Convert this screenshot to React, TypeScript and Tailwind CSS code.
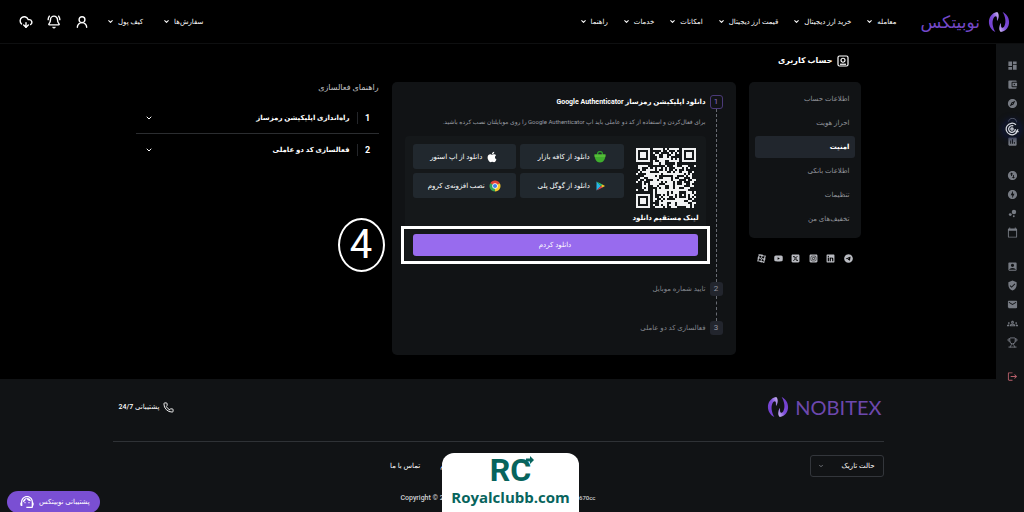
import type { ReactNode } from "react";
import {
  MdAccountBalanceWallet,
  MdAccountBox,
  MdArrowCircleUp,
  MdBubbleChart,
  MdCalendarToday,
  MdDashboard,
  MdExplore,
  MdInsertChart,
  MdLocalPostOffice,
  MdLogout,
  MdOfflineBolt,
  MdOutlineGroups,
  MdSupportAgent,
  MdSwapVerticalCircle,
  MdVerifiedUser,
} from "react-icons/md";
import { FaApple } from "react-icons/fa";
import { FaLinkedin, FaSquareInstagram, FaSquareXTwitter, FaTelegram, FaYoutube } from "react-icons/fa6";
import { SiAparat } from "react-icons/si";
import { BellRing, ChevronDown, CloudDownload, Phone, Trophy, UserRound } from "lucide-react";

const mainNav = ["معامله", "خرید ارز دیجیتال", "قیمت ارز دیجیتال", "امکانات", "خدمات", "راهنما"];
const userNav = ["سفارش‌ها", "کیف پول"];

const headerActions = [
  { label: "پروفایل", Icon: UserRound },
  { label: "اعلان‌ها", Icon: BellRing },
  { label: "دانلود", Icon: CloudDownload },
];

const accountMenu = [
  "اطلاعات حساب",
  "احراز هویت",
  "امنیت",
  "اطلاعات بانکی",
  "تنظیمات",
  "تخفیف‌های من",
];

const socials = [
  { label: "Telegram", Icon: FaTelegram },
  { label: "LinkedIn", Icon: FaLinkedin },
  { label: "Instagram", Icon: FaSquareInstagram },
  { label: "X", Icon: FaSquareXTwitter },
  { label: "YouTube", Icon: FaYoutube },
  { label: "Aparat", Icon: SiAparat },
];

const railGroups = [
  [MdDashboard, MdAccountBalanceWallet, MdExplore, MdArrowCircleUp, MdInsertChart],
  [MdSwapVerticalCircle, MdOfflineBolt, MdBubbleChart, MdCalendarToday],
  [MdAccountBox, MdVerifiedUser, MdLocalPostOffice, MdOutlineGroups, Trophy],
];

const guides = ["راه‌اندازی اپلیکیشن رمزساز", "فعالسازی کد دو عاملی"];

const downloads = [
  { label: "دانلود از کافه بازار", icon: <BazaarIcon /> },
  { label: "دانلود از اپ استور", icon: <FaApple className="size-3" /> },
  { label: "دانلود از گوگل پلی", icon: <PlayIcon /> },
  { label: "نصب افزونه‌ی کروم", icon: <ChromeIcon /> },
];

export default function App() {
  return (
    <div
      dir="rtl"
      className="relative flex min-h-screen flex-col overflow-hidden bg-black font-['Roboto','DejaVu_Sans',sans-serif] text-[7px] leading-3 text-white"
    >
      <Header />
      <div className="flex flex-1">
        <SideRail />
        <div className="flex min-w-0 flex-1 flex-col">
          <main className="mx-auto w-full max-w-[725px] pt-2 pb-6">
            <h1 className="mb-3 flex h-[18px] items-center gap-1 pr-3 text-[8px] font-bold">
              <AccountIcon />
              حساب کاربری
            </h1>
            <div className="grid grid-cols-[minmax(0,112fr)_minmax(0,344fr)_minmax(0,243fr)] items-start gap-[13px]">
              <AccountSidebar />
              <ActivationSteps />
              <ActivationGuide />
            </div>
          </main>
          <Footer />
        </div>
      </div>
      <SponsorBadge />
      <button
        type="button"
        className="absolute -bottom-px left-[7px] flex h-[22px] items-center gap-1 rounded-full bg-[#7a4fd3] pr-[10px] pl-3 font-medium"
      >
        پشتیبانی نوبیتکس
        <MdSupportAgent className="size-4" aria-hidden="true" />
      </button>
    </div>
  );
}

function Header() {
  return (
    <header className="flex h-11 shrink-0 items-center border-b border-[#0e0f10] pr-[14px] pl-[19px]">
      <a href="#" className="flex items-center gap-2 text-[17px] leading-6 text-[#7448c8]">
        <NobitexMark className="size-[22px]" />
        نوبیتکس
      </a>
      <nav className="mr-6 flex gap-[15px]">
        {mainNav.map((label) => (
          <NavMenu key={label} label={label} />
        ))}
      </nav>
      <nav className="mr-auto flex gap-5">
        {userNav.map((label) => (
          <NavMenu key={label} label={label} />
        ))}
      </nav>
      <div className="mr-[18px] flex gap-[14px]">
        {headerActions.map(({ label, Icon }) => (
          <button key={label} type="button" aria-label={label}>
            <Icon className="size-[14px]" strokeWidth={2.4} />
          </button>
        ))}
      </div>
    </header>
  );
}

function NavMenu({ label }: { label: string }) {
  return (
    <button type="button" className="flex items-center gap-1 whitespace-nowrap font-medium">
      {label}
      <ChevronDown className="size-[7px]" strokeWidth={3.5} aria-hidden="true" />
    </button>
  );
}

function SideRail() {
  return (
    <aside className="relative flex w-7 shrink-0 flex-col items-center gap-[23px] bg-[#111315] pt-4 pl-1 text-[#777b83]">
      {railGroups.map((icons, group) => (
        <div key={group} className="flex flex-col gap-2">
          {icons.map((Icon, index) => (
            <a key={index} href="#" className="block">
              <Icon className="size-[11px]" />
            </a>
          ))}
        </div>
      ))}
      <a href="#" aria-label="خروج" className="text-[#b9606b]">
        <MdLogout className="size-[11px]" />
      </a>
      <div className="absolute top-[77px] left-2 flex size-4 items-center justify-center rounded-full bg-[#111624] shadow-[0_0_6px_2px_#10173a]">
        <svg viewBox="0 0 16 16" className="size-[14px] fill-none stroke-[#d6d9e2]" strokeWidth="1.4" aria-hidden="true">
          <path d="M14.5 9A6.6 6.6 0 1 1 12.5 3.2M15 8.5l-2 2.5h2.6M11.8 8A3.8 3.8 0 1 1 9.5 4.5" />
          <circle cx="8" cy="8" r="1.3" />
        </svg>
      </div>
    </aside>
  );
}

function AccountSidebar() {
  return (
    <div>
      <ul className="flex flex-col gap-[2px] rounded-[5px] bg-[#111315] px-[6px] pt-[6px] pb-2 text-[#92959b]">
        {accountMenu.map((label) => (
          <li key={label}>
            <a
              href="#"
              className={`flex h-[22px] items-center rounded-[3px] px-[5px] ${
                label === "امنیت" ? "bg-[#21262d] font-bold text-white" : ""
              }`}
            >
              {label}
            </a>
          </li>
        ))}
      </ul>
      <div className="mt-4 flex justify-between px-2 text-[#b9bbc1]">
        {socials.map(({ label, Icon }) => (
          <a key={label} href="#" aria-label={label}>
            <Icon className="size-[9px]" />
          </a>
        ))}
      </div>
    </div>
  );
}

function ActivationSteps() {
  return (
    <ol className="rounded-[5px] bg-[#111315] px-[13px] pt-[13px] pb-5">
      <Step number={1} isActive title="دانلود اپلیکیشن رمزساز Google Authenticator">
        <p className="mt-[6px] h-[14px] whitespace-nowrap text-[6px] leading-[14px] text-[#9a9da4]">
          برای فعال‌کردن و استفاده از کد دو عاملی باید اپ Google Authenticator را روی موبایلتان نصب کرده باشید.
        </p>
        <div className="mt-[7px] mb-[18px] rounded-[4px] bg-[#15181a] p-2">
          <div className="flex h-[90px] gap-3 pr-[2px]">
            <div className="mt-1 w-[60px] shrink-0">
              <QrCode />
              <p className="mt-1 flex justify-center font-bold whitespace-nowrap">لینک مستقیم دانلود</p>
            </div>
            <div className="grid flex-1 grid-cols-2 content-start gap-1">
              {downloads.map(({ label, icon }) => (
                <button
                  key={label}
                  type="button"
                  className="flex h-[25px] items-center justify-center gap-1 rounded-[3px] bg-[#21282e] font-medium whitespace-nowrap"
                >
                  {icon}
                  {label}
                </button>
              ))}
            </div>
          </div>
          <div className="relative">
            <button type="button" className="h-[22px] w-full rounded-[3px] bg-[#986bee] font-medium">
              دانلود کردم
            </button>
            <div className="pointer-events-none absolute -inset-x-3 -inset-y-2 border-[3px] border-white" />
            <div className="absolute -top-4 -left-[75px] flex h-[54px] w-[47px] items-center justify-center rounded-[50%] border-2 border-white bg-black text-[40px] leading-none">
              4
            </div>
          </div>
        </div>
      </Step>
      <Step number={2} title="تایید شماره موبایل">
        <div className="h-[25px]" />
      </Step>
      <Step number={3} title="فعالسازی کد دو عاملی" />
    </ol>
  );
}

type StepProps = {
  number: number;
  title: string;
  isActive?: boolean;
  children?: ReactNode;
};

function Step({ number, title, isActive = false, children }: StepProps) {
  return (
    <li className="flex gap-1">
      <div className="flex w-[13px] shrink-0 flex-col items-center">
        <span
          className={`flex h-[14px] w-[13px] items-center justify-center rounded-[3px] text-[8px] ${
            isActive ? "border border-[#4b3a78] text-[#8e70d0]" : "bg-[#22252d] text-[#90939d]"
          }`}
        >
          {number}
        </span>
        {children ? <span className="flex-1 border-r border-dashed border-[#686b72]" /> : null}
      </div>
      <div className="min-w-0 flex-1">
        <h2 className={`h-[14px] leading-[14px] ${isActive ? "font-bold" : "font-medium text-[#84878e]"}`}>{title}</h2>
        {children}
      </div>
    </li>
  );
}

function ActivationGuide() {
  return (
    <section>
      <h2 className="mb-2 text-[8px] text-[#c6c7c9]">راهنمای فعالسازی</h2>
      <div className="divide-y divide-[#2b2d30]">
        {guides.map((title, index) => (
          <button key={title} type="button" className="flex h-8 w-full items-center pr-2 pl-[9px] font-bold">
            <span className="w-[6px] text-[9px]">{index + 1}</span>
            <span className="mr-[7px] h-3 border-r border-[#24262a] pr-[7px]">{title}</span>
            <ChevronDown className="mr-auto size-2" strokeWidth={3} aria-hidden="true" />
          </button>
        ))}
      </div>
    </section>
  );
}

function Footer() {
  return (
    <footer className="flex-1 bg-[#111315]">
      <div className="mx-auto w-full max-w-[771px]">
        <div className="flex items-center justify-between border-b border-[#2f3236] pt-4 pb-[22px]">
          <div dir="ltr" className="mr-[2px] flex items-center gap-[6px] font-['Lato',sans-serif] text-[20px] leading-6 text-[#6d48ae]">
            <NobitexMark className="size-[22px]" />
            NOBITEX
          </div>
          <a href="#" className="ml-[6px] flex items-center gap-1 font-medium">
            <Phone className="size-[11px]" aria-hidden="true" />
            پشتیبانی 24/7
          </a>
        </div>
        <div className="flex items-center pt-[13px]">
          <div className="relative w-[74px]">
            <select
              aria-label="حالت نمایش"
              className="h-[22px] w-full appearance-none rounded-[3px] border border-[#33363b] bg-[#111315] pr-2 text-[7px] font-medium"
            >
              <option>حالت تاریک</option>
            </select>
            <ChevronDown
              className="pointer-events-none absolute top-2 left-2 size-[6px] text-[#8b8e94]"
              strokeWidth={3}
              aria-hidden="true"
            />
          </div>
          <nav className="mr-auto ml-[36%] flex gap-5 font-medium">
            <a href="#">حریم</a>
            <a href="#">تماس با ما</a>
          </nav>
        </div>
        <p dir="ltr" className="mx-auto mt-[15px] flex w-[195px] justify-between font-medium text-[#d0d1d3]">
          <span>Copyright © 20</span>
          <span className="text-[6px]">670cc</span>
        </p>
      </div>
    </footer>
  );
}

function SponsorBadge() {
  return (
    <div
      dir="ltr"
      className="absolute bottom-0 left-1/2 flex h-[59px] w-[137px] -translate-x-[70px] flex-col items-center rounded-t-[12px] bg-white text-[#07645d]"
    >
      <div className="relative text-[32px] leading-[34px] font-bold">
        RC
        <svg viewBox="0 0 8 8" className="absolute top-[3px] -right-[3px] size-2 fill-[#07645d]" aria-hidden="true">
          <path d="M0 2.500H4V0L8 4L4 8V5.500H0Z" />
        </svg>
      </div>
      <p className="font-['Open_Sans',sans-serif] text-[15px] leading-5 font-bold">Royalclubb.com</p>
    </div>
  );
}

function NobitexMark({ className }: { className: string }) {
  return (
    <svg viewBox="0 0 24 24" className={className} aria-hidden="true">
      <defs>
        <linearGradient id="mark" x1="0" y1="1" x2="1" y2="0">
          <stop offset="0" stopColor="#6a35c4" />
          <stop offset="0.6" stopColor="#8050dc" />
          <stop offset="1" stopColor="#d3c2f3" />
        </linearGradient>
      </defs>
      <path
        fill="url(#mark)"
        d="M10 1C4 2 1 7 1 12C1 17 4 21 8 23C5 18 4 12 6 8C7 5.500 9 5 9.500 6.500C10 8 9.500 9.500 10 11C12 8 12.500 3 10 1Z"
      />
      <path
        fill="url(#mark)"
        transform="rotate(180 12 12)"
        d="M10 1C4 2 1 7 1 12C1 17 4 21 8 23C5 18 4 12 6 8C7 5.500 9 5 9.500 6.500C10 8 9.500 9.500 10 11C12 8 12.500 3 10 1Z"
      />
    </svg>
  );
}

function AccountIcon() {
  return (
    <svg viewBox="0 0 24 24" className="size-3 fill-none stroke-white" strokeWidth="2.4" aria-hidden="true">
      <rect x="2" y="2" width="20" height="20" rx="3" />
      <circle cx="12" cy="10.500" r="4" />
      <path d="M6 18.500H18" />
    </svg>
  );
}

function BazaarIcon() {
  return (
    <svg viewBox="0 0 24 24" className="size-3" aria-hidden="true">
      <path d="M7 8V6a5 5 0 0 1 10 0v2" fill="none" stroke="#2f9b2c" strokeWidth="2.500" />
      <path d="M1 7H23C23 16 19 23 12 23S1 16 1 7Z" fill="#3fae2e" />
      <path d="M1 7H23L22.500 12H1.500Z" fill="#55bd38" />
    </svg>
  );
}

function PlayIcon() {
  return (
    <svg viewBox="0 0 24 24" className="size-3" aria-hidden="true">
      <path d="M5 3V21L14 12Z" fill="#27b6e8" />
      <path d="M5 3L17 9L14 12Z" fill="#2fc66b" />
      <path d="M5 21L17 15L14 12Z" fill="#e8434d" />
      <path d="M17 9L22 12L17 15L14 12Z" fill="#f5c228" />
    </svg>
  );
}

function ChromeIcon() {
  return (
    <svg viewBox="0 0 24 24" className="size-3" aria-hidden="true">
      <path d="M12 12L2.500 6.500A11 11 0 0 1 21.500 6.500Z" fill="#e24335" />
      <path d="M12 12L21.500 6.500A11 11 0 0 1 12 23Z" fill="#f7c82d" />
      <path d="M12 12V23A11 11 0 0 1 2.500 6.500Z" fill="#35a353" />
      <circle cx="12" cy="12" r="5.500" fill="#fff" />
      <circle cx="12" cy="12" r="4.200" fill="#4280ea" />
    </svg>
  );
}

const QR_SIZE = 29;

function QrCode() {
  return (
    <svg
      viewBox={`0 0 ${QR_SIZE} ${QR_SIZE}`}
      className="block w-full fill-[#f1f2f3]"
      shapeRendering="crispEdges"
      role="img"
      aria-label="QR"
    >
      <path d={getQrPath()} />
    </svg>
  );
}

function getQrPath() {
  let seed = 4127;
  let path = "";

  for (let row = 0; row < QR_SIZE; row += 1) {
    for (let col = 0; col < QR_SIZE; col += 1) {
      seed = (seed * 1103515245 + 12345) % 2147483648;
      if (isQrModuleOn(row, col, seed / 2147483648 > 0.48)) {
        path += `M${col} ${row}h1v1h-1z`;
      }
    }
  }

  return path;
}

function isQrModuleOn(row: number, col: number, fallback: boolean) {
  const corners = [
    [3, 3],
    [3, QR_SIZE - 4],
    [QR_SIZE - 4, 3],
  ];

  for (const [centerRow, centerCol] of corners) {
    const distance = Math.max(Math.abs(row - centerRow), Math.abs(col - centerCol));
    if (distance <= 4) {
      return distance <= 1 || distance === 3;
    }
  }

  const alignment = Math.max(Math.abs(row - 22), Math.abs(col - 22));
  return alignment <= 2 ? alignment !== 1 : fallback;
}
